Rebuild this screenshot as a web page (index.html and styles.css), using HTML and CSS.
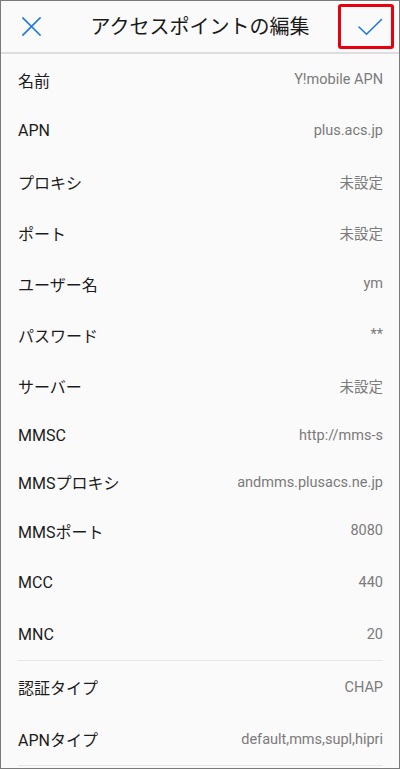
FILE: index.html
```html
<!DOCTYPE html>
<html lang="ja">
<head>
<meta charset="utf-8">
<title>アクセスポイントの編集</title>
<link rel="stylesheet" href="styles.css">
</head>
<body>
<div class="frame">
  <header class="header">
    <div class="hd-left">
      <svg class="icon-x" width="19" height="19" viewBox="0 0 19 19"><path d="M1 1 L18 18 M18 1 L1 18" stroke="#1f78e4" stroke-width="1.7" fill="none" stroke-linecap="square"/></svg>
    </div>
    <h1 class="title">アクセスポイントの編集</h1>
    <div class="hd-right">
      <div class="save-box">
        <svg class="icon-check" width="50" height="39" viewBox="0 0 50 39"><path d="M18 20 L25.5 27.3 L40.5 12.5" stroke="#1f78e4" stroke-width="1.6" fill="none" stroke-linecap="round" stroke-linejoin="round"/></svg>
      </div>
    </div>
  </header>
  <main class="list">
    <div class="row"><span class="label">名前</span><span class="value">Y!mobile APN</span></div>
    <div class="row"><span class="label">APN</span><span class="value">plus.acs.jp</span></div>
    <div class="row"><span class="label">プロキシ</span><span class="value">未設定</span></div>
    <div class="row"><span class="label">ポート</span><span class="value">未設定</span></div>
    <div class="row"><span class="label">ユーザー名</span><span class="value">ym</span></div>
    <div class="row"><span class="label">パスワード</span><span class="value">**</span></div>
    <div class="row"><span class="label">サーバー</span><span class="value">未設定</span></div>
    <div class="row row-a"><span class="label">MMSC</span><span class="value">http://mms-s</span></div>
    <div class="row row-b"><span class="label">MMSプロキシ</span><span class="value">andmms.plusacs.ne.jp</span></div>
    <div class="row"><span class="label">MMSポート</span><span class="value">8080</span></div>
    <div class="row row-tall"><span class="label">MCC</span><span class="value">440</span></div>
    <div class="row row-tall"><span class="label">MNC</span><span class="value">20</span></div>
    <div class="divider"></div>
    <div class="row row-tall"><span class="label">認証タイプ</span><span class="value">CHAP</span></div>
    <div class="row row-tall"><span class="label">APNタイプ</span><span class="value">default,mms,supl,hipri</span></div>
    <div class="divider"></div>
  </main>
</div>
</body>
</html>
```

FILE: styles.css
```css
html, body {
  margin: 0;
  padding: 0;
  background: #ffffff;
}
.frame {
  width: 400px;
  height: 769px;
  box-sizing: border-box;
  border: 1px solid #7a7a7a;
  background: #fafafa;
  overflow: hidden;
  font-family: Roboto, "Noto Sans CJK JP", sans-serif;
}
.header {
  height: 51px;
  border-bottom: 2px solid #dedede;
  display: grid;
  grid-template-columns: 1fr auto 1fr;
  align-items: center;
}
.hd-left {
  display: flex;
  align-items: center;
  padding-left: 21px;
}
.icon-x { display: block; }
.title {
  margin: 0;
  font-size: 20px;
  font-weight: 400;
  color: #1a1a1a;
  line-height: 1;
}
.hd-right {
  display: flex;
  justify-content: flex-end;
  padding-right: 5px;
}
.save-box {
  width: 50px;
  height: 39px;
  border: 3px solid #e8000f;
  border-radius: 3px;
}
.icon-check { display: block; }
.list {
  padding: 0 16px 0 17px;
}
.row {
  height: 51px;
  display: flex;
  align-items: center;
  justify-content: space-between;
}
.row-a { height: 48px; }
.row-b { height: 46px; }
.row-tall { height: 52px; }
.label {
  font-size: 16px;
  color: #1c1c1c;
}
.value {
  font-size: 14.5px;
  color: #7b7b7b;
}
.divider {
  height: 1px;
  background: #e6e6e6;
}
```
